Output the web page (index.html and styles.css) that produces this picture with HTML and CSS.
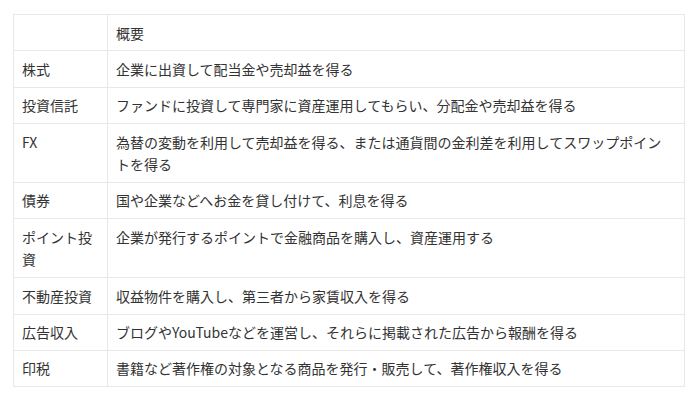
FILE: index.html
```html
<!DOCTYPE html>
<html lang="ja">
<head>
    <meta charset="UTF-8">
    <meta name="viewport" content="width=device-width, initial-scale=1.0">
    <title>投資の種類</title>
    <link rel="stylesheet" href="styles.css">
</head>
<body>

    <table class="summary">
        <thead>
            <tr>
                <th class="name"></th>
                <th>概要</th>
            </tr>
        </thead>
        <tbody>
            <tr>
                <td class="name">株式</td>
                <td>企業に出資して配当金や売却益を得る</td>
            </tr>
            <tr>
                <td class="name">投資信託</td>
                <td>ファンドに投資して専門家に資産運用してもらい、分配金や売却益を得る</td>
            </tr>
            <tr>
                <td class="name">FX</td>
                <td>為替の変動を利用して売却益を得る、または通貨間の金利差を利用してスワップポイントを得る</td>
            </tr>
            <tr>
                <td class="name">債券</td>
                <td>国や企業などへお金を貸し付けて、利息を得る</td>
            </tr>
            <tr>
                <td class="name">ポイント投資</td>
                <td>企業が発行するポイントで金融商品を購入し、資産運用する</td>
            </tr>
            <tr>
                <td class="name">不動産投資</td>
                <td>収益物件を購入し、第三者から家賃収入を得る</td>
            </tr>
            <tr>
                <td class="name">広告収入</td>
                <td>ブログやYouTubeなどを運営し、それらに掲載された広告から報酬を得る</td>
            </tr>
            <tr>
                <td class="name">印税</td>
                <td>書籍など著作権の対象となる商品を発行・販売して、著作権収入を得る</td>
            </tr>
        </tbody>
    </table>

</body>
</html>
```

FILE: styles.css
```css
body {
    margin: 14px 15px 0 13px;
    background: #ffffff;
    color: #333;
    font-family: "Noto Sans CJK JP", "Noto Sans", sans-serif;
    font-size: 14px;
}
.summary {
    width: 672px;
    border-collapse: collapse;
    border: 1px solid #e8e8e8;
}
.summary th,
.summary td {
    border: 1px solid #e8e8e8;
    padding: 6.5px 11px 6.5px 8px;
    line-height: 1.6;
    text-align: left;
    vertical-align: top;
    font-weight: normal;
}
.summary .name {
    width: 74px; /* wraps ポイント投資 after five characters */
}
```
